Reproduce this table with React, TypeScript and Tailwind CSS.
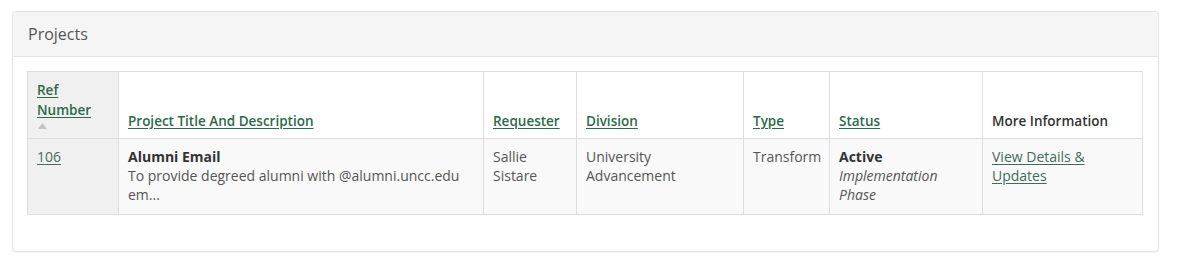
import React from "react";

const th = "border border-[#dddddd] px-[9px] pt-[8px] pb-[7px] align-bottom text-left font-semibold text-[13.5px] leading-[20px]";
const td = "border border-[#dddddd] px-[9px] pt-[8px] pb-[10px] align-top text-left";
const hl = "text-[#2d6a4c] underline underline-offset-2";

export default function App() {
  return (
    <div className="min-h-[273px] bg-white pt-[11px] pl-[12px]" style={{ fontFamily: '"Open Sans", sans-serif' }}>
      <div className="w-[1147px] rounded-[4px] border border-[#e3e3e3] bg-white shadow-[0_1px_1px_rgba(0,0,0,0.05)]">
        <div className="h-[45px] rounded-t-[4px] border-b border-[#e3e3e3] bg-[#f5f5f5] pl-[15px] pt-[11px] text-[16px] leading-[22px] text-[#555555]">
          Projects
        </div>
        <div className="px-[14px] pt-[14px] pb-[36px]">
          <table className="w-[1115px] table-fixed border-collapse text-[14px] leading-[19px] text-[#555555]">
            <colgroup>
              <col className="w-[91px]" />
              <col className="w-[365px]" />
              <col className="w-[93px]" />
              <col className="w-[167px]" />
              <col className="w-[86px]" />
              <col className="w-[153px]" />
              <col className="w-[160px]" />
            </colgroup>
            <thead>
              <tr className="bg-white">
                <th className={th + " bg-[#f0f0f0]"}>
                  <div className={hl}>Ref</div>
                  <div className={hl}>Number</div>
                  <div className="flex h-[11px] items-center pl-[1px]">
                    <svg width="9" height="6" viewBox="0 0 9 6">
                      <path d="M4.5 0 L9 6 L0 6 Z" fill="#c4c4c4" />
                    </svg>
                  </div>
                </th>
                <th className={th}><span className={hl}>Project Title And Description</span></th>
                <th className={th}><span className={hl}>Requester</span></th>
                <th className={th}><span className={hl}>Division</span></th>
                <th className={th}><span className={hl}>Type</span></th>
                <th className={th}><span className={hl}>Status</span></th>
                <th className={th + " text-[#333333]"}>More Information</th>
              </tr>
            </thead>
            <tbody>
              <tr className="bg-[#f9f9f9]">
                <td className={td + " bg-[#f0f0f0]"}>
                  <span className="text-[#4f6b5e] underline underline-offset-2">106</span>
                </td>
                <td className={td}>
                  <div className="font-bold text-[#333333]">Alumni Email</div>
                  <div>To provide degreed alumni with @alumni.uncc.edu em...</div>
                </td>
                <td className={td}>Sallie Sistare</td>
                <td className={td}>University Advancement</td>
                <td className={td}>Transform</td>
                <td className={td}>
                  <div className="font-bold text-[#333333]">Active</div>
                  <div className="italic">Implementation Phase</div>
                </td>
                <td className={td}>
                  <span className="text-[#3f6b5a] underline underline-offset-2">View Details &amp; Updates</span>
                </td>
              </tr>
            </tbody>
          </table>
        </div>
      </div>
    </div>
  );
}
